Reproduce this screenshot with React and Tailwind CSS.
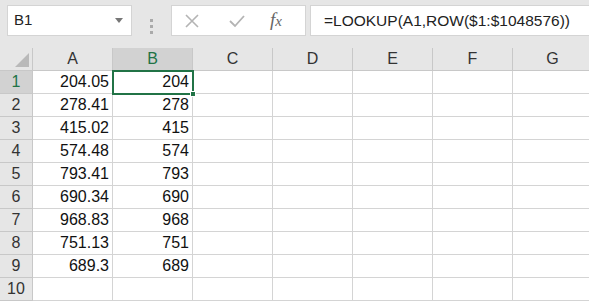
import React from 'react';

const cols = ['A', 'B', 'C', 'D', 'E', 'F', 'G'];
const data = [
  ['204.05', '204'],
  ['278.41', '278'],
  ['415.02', '415'],
  ['574.48', '574'],
  ['793.41', '793'],
  ['690.34', '690'],
  ['968.83', '968'],
  ['751.13', '751'],
  ['689.3', '689'],
  ['', ''],
];

const font = { fontFamily: '"Liberation Sans", Arial, sans-serif' };

function FormulaBar() {
  return (
    <div className="flex h-[48px] bg-[#e6e6e6] pt-[5px]">
      <div className="ml-[7px] flex h-[31px] w-[125px] items-center justify-between border border-[#d4d4d4] bg-white pl-[6px] pr-[8px]">
        <span className="text-[15px] text-[#222]">B1</span>
        <svg width="8" height="5" viewBox="0 0 8 5">
          <path d="M0 0h8L4 5z" fill="#777" />
        </svg>
      </div>
      <div className="flex w-[39px] flex-col items-center justify-center gap-[3px]">
        <span className="h-[3px] w-[3px] bg-[#aaa]" />
        <span className="h-[3px] w-[3px] bg-[#aaa]" />
        <span className="h-[3px] w-[3px] bg-[#aaa]" />
      </div>
      <div className="flex h-[31px] w-[135px] items-center border border-[#d4d4d4] bg-white">
        <svg className="ml-[12px]" width="16" height="16" viewBox="0 0 16 16">
          <path d="M2 2L14 14M14 2L2 14" stroke="#b4b4b4" strokeWidth="1.6" />
        </svg>
        <svg className="ml-[28px]" width="18" height="16" viewBox="0 0 18 16">
          <path d="M2 8L7 13L16 3" stroke="#b4b4b4" strokeWidth="1.8" fill="none" />
        </svg>
        <span className="ml-[24px] text-[19px] italic text-[#666]" style={{ fontFamily: '"Liberation Serif", serif' }}>
          <span>f</span><span className="text-[15px]">x</span>
        </span>
      </div>
      <div className="ml-[4px] flex h-[31px] flex-1 items-center border border-r-0 border-[#d4d4d4] bg-white pl-[13px]">
        <span className="text-[15.5px] text-[#222]">=LOOKUP(A1,ROW($1:$1048576))</span>
      </div>
    </div>
  );
}

function Grid() {
  return (
    <div className="relative overflow-hidden">
      <div className="grid w-[593px] grid-cols-[33px_80px_80px_80px_80px_80px_80px_80px] auto-rows-[23px]">
        <div className="flex items-end justify-end border-r border-b border-[#c8c8c8] bg-[#e6e6e6] p-[3px]">
          <svg width="14" height="14" viewBox="0 0 14 14">
            <path d="M14 0V14H0z" fill="#b9b9b9" />
          </svg>
        </div>
        {cols.map((c) => (
          <div
            key={c}
            className={
              'flex items-center justify-center border-r border-b text-[16px] leading-none ' +
              (c === 'B'
                ? 'border-r-[#c8c8c8] border-b-[#217346] bg-[#d2d2d2] text-[#217346]'
                : 'border-[#c8c8c8] bg-[#e6e6e6] text-[#333]')
            }
          >
            {c}
          </div>
        ))}
        {data.map((row, i) => (
          <React.Fragment key={i}>
            <div
              className={
                'flex items-center justify-center border-r border-b border-[#c8c8c8] text-[16px] leading-none ' +
                (i === 0 ? 'bg-[#d2d2d2] text-[#217346]' : 'bg-[#e6e6e6] text-[#333]')
              }
            >
              {i + 1}
            </div>
            {cols.map((c, j) => (
              <div
                key={c}
                className="flex items-center justify-end border-r border-b border-[#d4d4d4] bg-white pr-[3px] text-[16px] leading-none text-[#111]"
              >
                {j < 2 ? row[j] : ''}
              </div>
            ))}
          </React.Fragment>
        ))}
      </div>
      <div className="pointer-events-none absolute left-[112px] top-[22px] h-[25px] w-[82px] border-2 border-[#217346]">
        <div className="absolute -bottom-[4px] -right-[4px] h-[6px] w-[6px] border border-white bg-[#217346]" />
      </div>
    </div>
  );
}

export default function App() {
  return (
    <div className="h-[306px] w-[589px] overflow-hidden bg-white" style={font}>
      <FormulaBar />
      <Grid />
    </div>
  );
}
